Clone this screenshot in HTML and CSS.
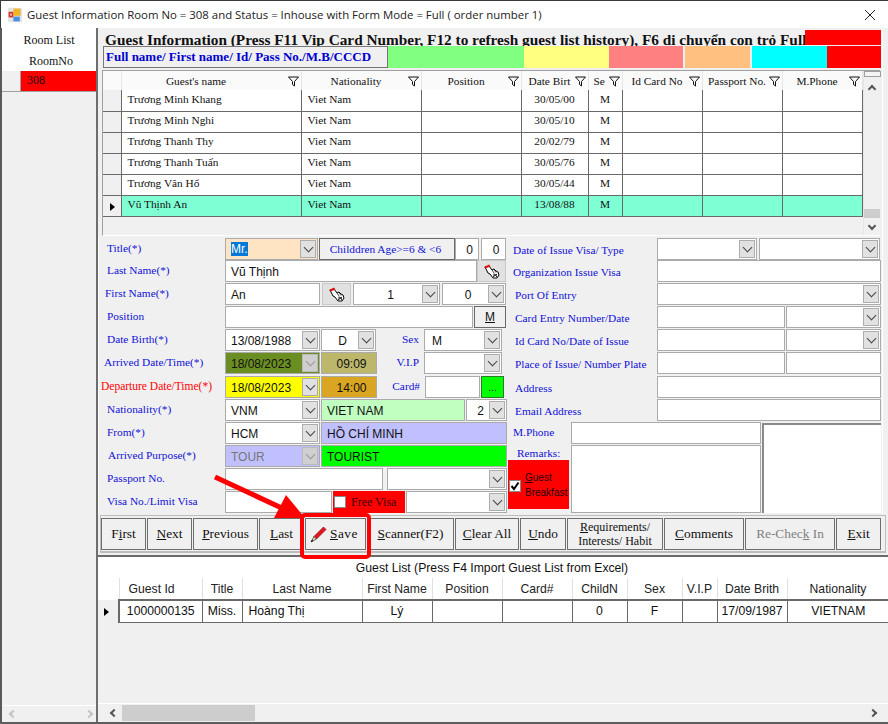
FILE: index.html
```html
<!DOCTYPE html>
<html lang="en">
<head>
  <meta charset="UTF-8">
  <title>Guest Information</title>
  <link rel="stylesheet" href="styles.css">
</head>
<body>
<div class="window">

  <div class="titlebar">
    <svg class="app-icon" viewBox="0 0 20 20">
      <rect x="1" y="1" width="18" height="18" fill="#e4e4e4"/>
      <rect x="2" y="6" width="6" height="7" fill="#d8302a"/>
      <rect x="4" y="8" width="2" height="3" fill="#f5d0c0"/>
      <rect x="8" y="2" width="9" height="9" fill="#f0b428"/>
      <rect x="8" y="12" width="8" height="6" fill="#4a8fe0"/>
    </svg>
    <span class="title-text">Guest Information Room No = 308 and Status = Inhouse with Form Mode = Full ( order number 1)</span>
    <svg class="close-x" viewBox="0 0 12 12"><path d="M1 1L11 11M11 1L1 11" stroke="#222" stroke-width="1" fill="none"/></svg>
  </div>

  <div class="main">
    <aside class="side">
      <div class="side-head">
        <div>Room List</div>
        <div class="side-col">RoomNo</div>
      </div>
      <div class="side-row"><span class="side-hdr"></span><span class="side-cell">308</span></div>
      <div class="side-fill"></div>
      <div class="side-scroll"><span class="chev chev-l faint"></span><span class="chev chev-r faint"></span></div>
    </aside>

    <div class="content">
      <div class="upper">
        <div class="heading-row">
          <div class="heading">Guest Information (Press F11 Vip Card Number, F12 to refresh guest list history), F6 di chuyển con trỏ Full</div>
          <div class="heading-flag"></div>
        </div>

        <div class="filter-row">
          <div class="filter-box">Full name/ First name/ Id/ Pass No./M.B/CCCD</div>
          <span class="swatch sw-green"></span>
          <span class="swatch sw-yellow"></span>
          <span class="swatch sw-pink"></span>
          <span class="swatch sw-orange"></span>
          <span class="swatch sw-cyan"></span>
          <span class="swatch sw-red"></span>
        </div>

        <div class="history">
          <table class="history-table">
            <colgroup>
              <col class="c18"><col class="c180"><col class="c120"><col class="c100"><col class="c67"><col class="c34"><col class="c80"><col class="c80"><col class="c80">
            </colgroup>
            <thead>
              <tr>
                <th></th>
                <th class="th-name"><span>Guest's name</span><svg class="funnel"><use href="#funnel"/></svg></th>
                <th><span>Nationality</span><svg class="funnel"><use href="#funnel"/></svg></th>
                <th><span>Position</span><svg class="funnel"><use href="#funnel"/></svg></th>
                <th class="th-tight"><span>Date Birt</span><svg class="funnel"><use href="#funnel"/></svg></th>
                <th class="th-tight th-sex"><span>Se</span><svg class="funnel"><use href="#funnel"/></svg></th>
                <th><span>Id Card No</span><svg class="funnel"><use href="#funnel"/></svg></th>
                <th><span>Passport No.</span><svg class="funnel"><use href="#funnel"/></svg></th>
                <th><span>M.Phone</span><svg class="funnel"><use href="#funnel"/></svg></th>
              </tr>
            </thead>
            <tbody>
              <tr><td class="rh"></td><td>Trương Minh Khang</td><td>Viet Nam</td><td></td><td class="mid">30/05/00</td><td class="mid">M</td><td></td><td></td><td></td></tr>
              <tr><td class="rh"></td><td>Trương Minh Nghi</td><td>Viet Nam</td><td></td><td class="mid">30/05/10</td><td class="mid">M</td><td></td><td></td><td></td></tr>
              <tr><td class="rh"></td><td>Trương Thanh Thy</td><td>Viet Nam</td><td></td><td class="mid">20/02/79</td><td class="mid">M</td><td></td><td></td><td></td></tr>
              <tr><td class="rh"></td><td>Trương Thanh Tuấn</td><td>Viet Nam</td><td></td><td class="mid">30/05/76</td><td class="mid">M</td><td></td><td></td><td></td></tr>
              <tr><td class="rh"></td><td>Trương Văn Hổ</td><td>Viet Nam</td><td></td><td class="mid">30/05/44</td><td class="mid">M</td><td></td><td></td><td></td></tr>
              <tr class="current"><td class="rh"><span class="row-mark"></span></td><td>Vũ Thịnh An</td><td>Viet Nam</td><td></td><td class="mid">13/08/88</td><td class="mid">M</td><td></td><td></td><td></td></tr>
            </tbody>
          </table>
          <div class="vscroll">
            <span class="vscroll-cap"></span>
            <span class="chev chev-u"></span>
            <span class="vscroll-thumb"></span>
            <span class="chev chev-d"></span>
          </div>
        </div>

        <div class="form">
          <div class="form-left">
            <div class="row row-short">
              <label>Title(*)</label>
              <div class="sel w93 bg-peach"><span class="picked">Mr.</span><span class="drop"></span></div>
              <button class="btn-child">Childdren Age&gt;=6 &amp; &lt;6</button>
              <div class="fld w24 mid">0</div>
              <div class="fld w25 mid gap2">0</div>
            </div>
            <div class="row">
              <label>Last Name(*)</label>
              <div class="fld w252">Vũ Thịnh</div>
              <button class="btn-hand"><svg class="hand"><use href="#hand"/></svg></button>
            </div>
            <div class="row">
              <label class="in-1">First Name(*)</label>
              <div class="fld w95">An</div>
              <button class="btn-hand gap2"><svg class="hand"><use href="#hand"/></svg></button>
              <div class="sel w87 gap2 center"><span>1</span><span class="drop"></span></div>
              <div class="sel w64 gap2 center"><span>0</span><span class="drop"></span></div>
            </div>
            <div class="row">
              <label>Position</label>
              <div class="fld w248"></div>
              <button class="btn-m"><u>M</u></button>
            </div>
            <div class="row">
              <label>Date Birth(*)</label>
              <div class="sel w95"><span>13/08/1988</span><span class="drop"></span></div>
              <div class="sel w55 gap1 center"><span>D</span><span class="drop"></span></div>
              <span class="mini-label w48">Sex</span>
              <div class="sel w78"><span class="pad-sel">M</span><span class="drop"></span></div>
            </div>
            <div class="row row-tall">
              <label class="in-2">Arrived Date/Time(*)</label>
              <div class="sel w95 bg-olive"><span>18/08/2023</span><span class="drop off"></span></div>
              <div class="fld w56 gap1 mid bg-khaki">09:09</div>
              <span class="mini-label w47">V.I.P</span>
              <div class="sel w78"><span></span><span class="drop"></span></div>
            </div>
            <div class="row">
              <label class="in-3 red-text">Departure Date/Time(*)</label>
              <div class="sel w95 bg-yellow"><span>18/08/2023</span><span class="drop"></span></div>
              <div class="fld w56 gap1 mid bg-gold">14:00</div>
              <span class="mini-label w48">Card#</span>
              <div class="fld w55"></div>
              <button class="btn-dots">...</button>
            </div>
            <div class="row">
              <label>Nationality(*)</label>
              <div class="sel w95"><span>VNM</span><span class="drop"></span></div>
              <div class="fld w144 gap1 bg-mint">VIET NAM</div>
              <div class="sel w41 gap1 center"><span>2</span><span class="drop"></span></div>
            </div>
            <div class="row">
              <label>From(*)</label>
              <div class="sel w95"><span>HCM</span><span class="drop"></span></div>
              <div class="fld w186 gap1 bg-lilac">HỒ CHÍ MINH</div>
            </div>
            <div class="row">
              <label class="in-0">Arrived Purpose(*)</label>
              <div class="sel w95 bg-lilac muted"><span>TOUR</span><span class="drop off"></span></div>
              <div class="fld w186 gap1 bg-lime">TOURIST</div>
            </div>
            <div class="row">
              <label>Passport No.</label>
              <div class="fld w158"></div>
              <div class="sel w120 gap4"><span></span><span class="drop"></span></div>
            </div>
            <div class="row">
              <label>Visa No./Limit Visa</label>
              <div class="fld w107"></div>
              <div class="free-visa"><span class="check"></span><span>Free Visa</span></div>
              <div class="sel w101 gap1"><span></span><span class="drop"></span></div>
            </div>
          </div>

          <div class="form-right">
            <div class="row row-short">
              <label class="rl rl-in">Date of Issue Visa/ Type</label>
              <div class="sel w100"><span></span><span class="drop"></span></div>
              <div class="sel w121 gap2"><span></span><span class="drop"></span></div>
            </div>
            <div class="row">
              <label class="rl rl-in">Organization Issue Visa</label>
              <div class="fld w224"></div>
            </div>
            <div class="row">
              <label class="rl">Port Of Entry</label>
              <div class="sel w224"><span></span><span class="drop"></span></div>
            </div>
            <div class="row">
              <label class="rl">Card Entry Number/Date</label>
              <div class="fld w128"></div>
              <div class="sel w95 gap1"><span></span><span class="drop"></span></div>
            </div>
            <div class="row">
              <label class="rl">Id Card No/Date of Issue</label>
              <div class="fld w128"></div>
              <div class="sel w95 gap1"><span></span><span class="drop"></span></div>
            </div>
            <div class="row row-tall">
              <label class="rl">Place of Issue/ Number Plate</label>
              <div class="fld w128"></div>
              <div class="fld w95 gap1"></div>
            </div>
            <div class="row">
              <label class="rl">Address</label>
              <div class="fld w224"></div>
            </div>
            <div class="row">
              <label class="rl">Email Address</label>
              <div class="fld w224"></div>
            </div>
            <div class="notes">
              <div class="notes-labels">
                <div class="note-label">M.Phone</div>
                <div class="note-label remarks">Remarks:</div>
                <div class="breakfast">
                  <span class="check checked"><svg viewBox="0 0 10 10"><path d="M1.5 5L4 8L8.5 1.5" stroke="#000" stroke-width="2" fill="none"/></svg></span>
                  <span class="breakfast-text"><u>G</u>uest<br>Breakfast</span>
                </div>
              </div>
              <div class="notes-fields">
                <div class="fld w190"></div>
                <div class="fld note-area"></div>
              </div>
              <div class="note-box"></div>
            </div>
          </div>
        </div>
      </div>

      <div class="actions">
        <button class="act w45"><span>F<u>i</u>rst</span></button>
        <button class="act w45"><span><u>N</u>ext</span></button>
        <button class="act w65"><span><u>P</u>revious</span></button>
        <button class="act w45"><span><u>L</u>ast</span></button>
        <button class="act act-save w61"><svg class="pencil" viewBox="0 0 17 17"><path d="M4 10.5L13.5 1L16 3.5L6.5 13Z" fill="#e8141c" stroke="#7a0c10" stroke-width=".7"/><path d="M4 10.5L6.5 13L1 16Z" fill="#f2d9b0" stroke="#222" stroke-width=".7"/><path d="M1 16L2 13.8L3.2 15Z" fill="#000"/></svg><span><u>S</u>ave</span></button>
        <button class="act w87"><span><u>S</u>canner(F2)</span></button>
        <button class="act w64"><span><u>C</u>lear All</span></button>
        <button class="act w46"><span><u>U</u>ndo</span></button>
        <button class="act w96 two-line"><span><u>R</u>equirements/<br>Interests/ Habit</span></button>
        <button class="act w80"><span><u>C</u>omments</span></button>
        <button class="act w90 disabled"><span>Re-Chec<u>k</u> In</span></button>
        <button class="act w45"><span><u>E</u>xit</span></button>
      </div>

      <div class="guests">
        <div class="guests-title">Guest List (Press F4 Import Guest List from Excel)</div>
        <table class="guests-table">
          <colgroup>
            <col class="g21"><col class="g83"><col class="g40"><col class="g120"><col class="g70"><col class="g70"><col class="g70"><col class="g55"><col class="g55"><col class="g35"><col class="g70"><col class="g102">
          </colgroup>
          <thead>
            <tr><th></th><th class="th-id">Guest Id</th><th>Title</th><th>Last Name</th><th>First Name</th><th>Position</th><th>Card#</th><th>ChildN</th><th>Sex</th><th>V.I.P</th><th>Date Brith</th><th>Nationality</th></tr>
          </thead>
          <tbody>
            <tr>
              <td class="rh"><span class="row-mark"></span></td>
              <td class="mid first-cell">1000000135</td><td class="mid">Miss.</td><td>Hoàng Thị</td><td class="mid">Lý</td><td></td><td></td><td class="mid">0</td><td class="mid">F</td><td></td><td class="mid">17/09/1987</td><td class="mid">VIETNAM</td>
            </tr>
          </tbody>
        </table>
      </div>

      <div class="hscroll">
        <span class="chev chev-l"></span>
        <span class="hscroll-thumb"></span>
        <span class="chev chev-r"></span>
      </div>
    </div>
  </div>

  <div class="desktop-strip"></div>

  <!-- red marker drawn over the screenshot -->
  <svg class="marker" viewBox="0 0 888 724">
    <path d="M215 477L286 510" stroke="#f00" stroke-width="5" fill="none"/>
    <polygon points="286,495 305,518 274,518" fill="#f00"/>
    <rect x="302" y="515" width="67" height="42" rx="3" fill="none" stroke="#f00" stroke-width="4"/>
  </svg>

  <svg class="defs">
    <symbol id="funnel" viewBox="0 0 11 11">
      <path d="M.5 1H10.5L6.5 5.5V10L4.5 8.5V5.5Z" fill="none" stroke="#111" stroke-width="1"/>
    </symbol>
    <symbol id="hand" viewBox="0 0 17 15">
      <path d="M2 3L6 2L9 6L11 5L13 7L15 8L16 11L14 14L10 14L7 10L5 9Z" fill="#fff" stroke="#000" stroke-width="1"/>
      <path d="M1 3L6 .5L7.5 2.5L2.5 4.5Z" fill="#e01010"/>
      <path d="M9 6L11 9M11 5.5L13 8.5" stroke="#000" stroke-width=".7"/>
      <path d="M10 11H14M11 9.5L14 13M10 13L14 10" stroke="#222" stroke-width="1"/>
    </symbol>
  </svg>
</div>
</body>
</html>
```

FILE: styles.css
```css
* {
  box-sizing: border-box;
}

html, body {
  margin: 0;
  padding: 0;
  height: 100%;
  overflow: hidden;
}

body {
  font-family: "Liberation Serif", serif;
  font-size: 11.33px;
  color: #111;
  background-color: #f0f0f0;
}

button {
  font-family: "Liberation Serif", serif;
  padding: 0;
  margin: 0;
  color: #111;
}

.window {
  position: relative;
  width: 888px;
  height: 724px;
  display: flex;
  flex-direction: column;
  border-top: 1px solid #3a3a3a;
  overflow: hidden;
}

/* title bar */
.titlebar {
  height: 27px;
  flex: none;
  display: flex;
  align-items: center;
  background-color: #fff;
  border-left: 1px solid #3a3a3a;
  padding-left: 6px;
}

.app-icon {
  width: 16px;
  height: 16px;
  margin-right: 4px;
}

.title-text {
  font-family: "Open Sans", sans-serif;
  font-size: 11.4px;
  flex: 1;
  white-space: nowrap;
  color: #222;
}

.close-x {
  width: 12px;
  height: 12px;
  margin-right: 12px;
}

/* room list */
.main {
  flex: 1;
  display: flex;
  min-height: 0;
}

.side {
  width: 98px;
  flex: none;
  display: flex;
  flex-direction: column;
  border-left: 2px solid #5a5a5a;
  border-right: 2px solid #6e6e6e;
}

.side-head {
  height: 43px;
  background-color: #fff;
  text-align: center;
  padding-top: 2px;
  line-height: 21px;
  font-size: 12px;
}

.side-col {
  padding-left: 4px;
}

.side-row {
  height: 21px;
  display: flex;
  border-bottom: 1px solid #a0a0a0;
}

.side-hdr {
  width: 19px;
  border-right: 1px solid #a0a0a0;
}

.side-cell {
  flex: 1;
  background-color: #f00;
  padding-left: 6px;
  line-height: 18px;
  font-size: 12px;
}

.side-fill {
  flex: 1;
}

.side-scroll {
  height: 16px;
  margin-bottom: 1px;
  border-top: 1px solid #fff;
  display: flex;
  align-items: center;
  justify-content: space-between;
  padding: 0 4px 0 8px;
}

.content {
  flex: 1;
  min-width: 0;
  display: flex;
  flex-direction: column;
}

.upper {
  width: 785px;
  border-right: 1px solid #fff;
  padding-top: 2px;
}

/* heading and colour legend */
.heading-row {
  display: flex;
  height: 16px;
  padding-left: 7px;
  padding-right: 1px;
}

.heading {
  flex: 1;
  min-width: 0;
  font-size: 15.3px;
  font-weight: bold;
  line-height: 20px;
  white-space: nowrap;
  overflow: hidden;
}

.heading-flag {
  width: 76px;
  height: 15px;
  background-color: #f00;
}

.filter-row {
  display: flex;
  height: 22px;
  margin-left: 5px;
  margin-right: 1px;
}

.filter-box {
  width: 285px;
  border: 1px solid #777;
  font-size: 13px;
  font-weight: bold;
  color: #0000d0;
  line-height: 20px;
  padding-left: 2px;
  white-space: nowrap;
  overflow: hidden;
}

.swatch {
  display: block;
}

.sw-green { width: 137px; background-color: #80ff80; }
.sw-yellow { width: 85px; background-color: #ffff80; }
.sw-pink { width: 74px; background-color: #ff8080; margin-right: 2px; }
.sw-orange { width: 65px; background-color: #ffc080; margin-right: 2px; }
.sw-cyan { width: 75px; background-color: #0ff; }
.sw-red { width: 54px; background-color: #f00; }

/* history grid */
.history {
  display: flex;
  height: 166px;
  margin: 2px 2px 0 4px;
  border-top: 1px solid #a0a0a0;
  border-left: 1px solid #a0a0a0;
  border-bottom: 1px solid #fff;
}

.history-table {
  width: 759px;
  table-layout: fixed;
  border-collapse: collapse;
  align-self: flex-start;
}

.c18 { width: 18px; }
.c180 { width: 180px; }
.c120 { width: 120px; }
.c100 { width: 100px; }
.c67 { width: 67px; }
.c34 { width: 34px; }
.c80 { width: 80px; }

.history-table th {
  height: 19px;
  position: relative;
  background-color: #fafafa;
  border-right: 1px solid #e6e6e6;
  font-weight: normal;
  font-size: 11.33px;
  text-align: center;
  padding: 0 10px 0 0;
  white-space: nowrap;
  overflow: hidden;
}

.history-table .th-name {
  padding-right: 30px;
}

.history-table .th-tight {
  text-align: left;
  padding-left: 7px;
}

.history-table .th-sex {
  padding-left: 5px;
}

.funnel {
  position: absolute;
  right: 2px;
  top: 5px;
  width: 11px;
  height: 11px;
}

.history-table td {
  height: 21px;
  padding: 0 0 3px 6px;
  background-color: #fff;
  border-right: 1px solid #696969;
  border-bottom: 1px solid #696969;
  white-space: nowrap;
  overflow: hidden;
}

.history-table td.mid {
  padding-left: 0;
}

.history-table .rh {
  background-color: #f0f0f0;
  padding: 0;
}

.history-table .current td {
  background-color: #7fffd4;
}

.history-table .current .rh {
  background-color: #f0f0f0;
  text-align: center;
  padding-left: 2px;
}

.mid {
  text-align: center;
}

.row-mark {
  display: inline-block;
  width: 0;
  height: 0;
  border-left: 5px solid #000;
  border-top: 4.5px solid transparent;
  border-bottom: 4.5px solid transparent;
  vertical-align: middle;
}

.vscroll {
  width: 18px;
  display: flex;
  flex-direction: column;
  align-items: center;
  border-left: 1px solid #e6e6e6;
}

.vscroll-cap {
  width: 17px;
  height: 6px;
  border: 1px solid #a0a0a0;
  background-color: #f4f4f4;
  margin-bottom: 9px;
}

.vscroll-thumb {
  width: 16px;
  height: 9px;
  background-color: #cdcdcd;
  margin-top: 117px;
  margin-bottom: 5px;
}

/* chevrons, shared by scrollbars */
.chev {
  display: block;
  width: 6px;
  height: 6px;
  border-top: 2px solid #555;
  border-left: 2px solid #555;
}

.chev-u { transform: rotate(45deg); }
.chev-d { transform: rotate(225deg); }
.chev-l { transform: rotate(-45deg); }
.chev-r { transform: rotate(135deg); }

.chev.faint {
  border-color: #c4c4c4;
}

/* form */
.form {
  display: flex;
  margin-top: 2px;
}

.form-left {
  width: 409px;
  flex: none;
  border-left: 1px solid #fff;
}

.form-right {
  flex: 1;
}

.row {
  display: flex;
  height: 23px;
  align-items: flex-start;
}

.row-short {
  height: 22px;
}

.row-tall {
  height: 24px;
}

.row label {
  width: 126px;
  flex: none;
  color: #1010d8;
  line-height: 21px;
  padding-left: 8px;
  white-space: nowrap;
}

.row .in-0 { padding-left: 9px; }
.row .in-1 { padding-left: 6px; }
.row .in-2 { padding-left: 5px; }
.row .in-3 { padding-left: 2px; font-size: 11.5px; }
.row .red-text { color: #f00; }

.row .rl {
  width: 150px;
  padding-left: 8px;
  padding-top: 2px;
}

.row .rl-in {
  padding-left: 6px;
}

.fld, .sel {
  height: 22px;
  flex: none;
  background-color: #fff;
  border: 1px solid #ababab;
  font-family: "Liberation Sans", sans-serif;
  font-size: 12px;
  line-height: 22px;
  padding-left: 5px;
  white-space: nowrap;
  overflow: hidden;
}

.sel {
  display: flex;
  justify-content: space-between;
  padding-right: 1px;
}

.sel.center > span:first-child {
  flex: 1;
  text-align: center;
}

.pad-sel {
  padding-left: 2px;
}

.drop {
  position: relative;
  display: block;
  width: 16px;
  height: 18px;
  margin-top: 1px;
  flex: none;
  background-color: #e1e1e1;
  border: 1px solid #adadad;
}

.drop::before {
  content: "";
  position: absolute;
  left: 4px;
  top: 3px;
  width: 6px;
  height: 6px;
  border-right: 1px solid #444;
  border-bottom: 1px solid #444;
  transform: rotate(45deg);
}

.drop.off {
  background-color: #cfcfcf;
  border-color: #bbb;
}

.drop.off::before {
  border-color: #999;
}

.picked {
  background-color: #0078d7;
  color: #fff;
  line-height: 14px;
  height: 14px;
  margin-top: 3px;
}

.bg-peach { background-color: #ffe4c4; }
.bg-olive { background-color: #6b8e23; }
.bg-khaki { background-color: #bdb76b; }
.bg-yellow { background-color: #ff0; }
.bg-gold { background-color: #daa520; }
.bg-mint { background-color: #c0ffc0; }
.bg-lilac { background-color: #c0c0ff; }
.bg-lime { background-color: #0f0; }
.muted { color: #777; }

.btn-child {
  width: 136px;
  height: 22px;
  margin-left: 1px;
  padding-right: 3px;
  background-color: #f0f0f0;
  border: 1px solid #696969;
  color: #1010d8;
  font-size: 11.33px;
}

.btn-hand {
  width: 29px;
  height: 22px;
  flex: none;
  background-color: #e1e1e1;
  border: 1px solid #c8c8c8;
}

.hand {
  display: block;
  width: 17px;
  height: 15px;
  margin: 1px auto 0;
}

.btn-m {
  width: 32px;
  height: 22px;
  margin-left: 1px;
  background-color: #f0f0f0;
  border: 1px solid #696969;
  font-family: "Liberation Sans", sans-serif;
  font-size: 12px;
}

.btn-dots {
  width: 23px;
  height: 22px;
  margin-left: 1px;
  background-color: #0f0;
  border: 1px solid #2a7a2a;
  font-family: "Liberation Sans", sans-serif;
  font-size: 10px;
}

.mini-label {
  flex: none;
  color: #1010d8;
  line-height: 21px;
  text-align: right;
  padding-right: 5px;
}

.gap1 { margin-left: 1px; }
.gap2 { margin-left: 2px; }
.gap4 { margin-left: 4px; }

.w24 { width: 24px; }
.w25 { width: 25px; }
.w41 { width: 41px; }
.w45 { width: 45px; }
.w46 { width: 46px; }
.w47 { width: 47px; }
.w48 { width: 48px; }
.w55 { width: 55px; }
.w56 { width: 56px; }
.w61 { width: 61px; }
.w64 { width: 64px; }
.w65 { width: 65px; }
.w78 { width: 78px; }
.w80 { width: 80px; }
.w87 { width: 87px; }
.w90 { width: 90px; }
.w93 { width: 93px; }
.w95 { width: 95px; }
.w96 { width: 96px; }
.w100 { width: 100px; }
.w101 { width: 101px; }
.w107 { width: 107px; }
.w120 { width: 120px; }
.w121 { width: 121px; }
.w128 { width: 128px; }
.w144 { width: 144px; }
.w158 { width: 158px; }
.w186 { width: 186px; }
.w190 { width: 190px; }
.w224 { width: 224px; }
.w248 { width: 248px; }
.w252 { width: 252px; }

.free-visa {
  width: 72px;
  height: 22px;
  margin-left: 1px;
  flex: none;
  display: flex;
  align-items: center;
  gap: 5px;
  padding-left: 1px;
  background-color: #f00;
  color: #3a0000;
  font-size: 12px;
  white-space: nowrap;
}

.check {
  display: block;
  width: 12px;
  height: 12px;
  flex: none;
  background-color: #fff;
  border: 1px solid #888;
}

.check svg {
  display: block;
  width: 10px;
  height: 10px;
}

/* remarks block */
.notes {
  display: flex;
  height: 92px;
}

.notes-labels {
  width: 64px;
  flex: none;
  position: relative;
}

.note-label {
  color: #1010d8;
  line-height: 21px;
  padding-left: 6px;
}

.note-label.remarks {
  padding-left: 10px;
}

.breakfast {
  width: 61px;
  height: 49px;
  margin-left: 1px;
  margin-top: -4px;
  display: flex;
  align-items: center;
  background-color: #f00;
  overflow: hidden;
}

.breakfast .check {
  margin-left: 1px;
  margin-top: 2px;
}

.breakfast-text {
  font-family: "Liberation Sans", sans-serif;
  font-size: 10px;
  line-height: 15px;
  margin-left: 4px;
  white-space: nowrap;
  color: #200;
}

.notes-fields {
  width: 191px;
  flex: none;
}

.note-area {
  width: 190px;
  height: 68px;
  margin-top: 1px;
}

.note-box {
  width: 119px;
  height: 90px;
  margin-top: 1px;
  background-color: #fff;
  border-top: 2px solid #8a8a8a;
  border-left: 2px solid #8a8a8a;
}

/* action buttons */
.actions {
  display: flex;
  gap: 1px;
  width: 786px;
  height: 38px;
  margin: 1px 0 0 2px;
  padding: 2px 0 0 0;
  border: 1px solid #bdbdbd;
  border-bottom-width: 2px;
}

.act {
  flex: none;
  height: 32px;
  display: flex;
  align-items: center;
  justify-content: center;
  gap: 5px;
  background-color: #f0f0f0;
  border: 1px solid #6e6e6e;
  font-size: 13.33px;
  white-space: nowrap;
}

.act.two-line {
  font-size: 12px;
  line-height: 14px;
}

.act.disabled {
  color: #808080;
}

.act.act-save {
  justify-content: flex-start;
  padding-left: 4px;
  gap: 3px;
  letter-spacing: 0.5px;
}

.pencil {
  width: 17px;
  height: 17px;
}

/* guest list */
.guests {
  flex: 1;
  min-height: 0;
  border-top: 2px solid #6a6a6a;
  margin-top: 2px;
  font-family: "Liberation Sans", sans-serif;
  font-size: 12.2px;
}

.guests-title {
  height: 21px;
  background-color: #fff;
  text-align: center;
  line-height: 22px;
  padding-right: 2px;
}

.guests-table {
  width: 790px;
  table-layout: fixed;
  border-collapse: collapse;
}

.g21 { width: 21px; }
.g83 { width: 83px; }
.g40 { width: 40px; }
.g120 { width: 120px; }
.g70 { width: 70px; }
.g55 { width: 55px; }
.g35 { width: 35px; }
.g102 { width: 102px; }

.guests-table th {
  height: 22px;
  background-color: #fff;
  border-right: 1px solid #e0e0e0;
  border-bottom: 2px solid #696969;
  font-weight: normal;
  color: #222;
  white-space: nowrap;
}

.guests-table th:first-child {
  border-bottom: none;
}

.guests-table .th-id {
  text-align: left;
  padding-left: 9px;
}

.guests-table td {
  height: 22px;
  padding: 0 0 1px 6px;
  background-color: #fff;
  border-right: 1px solid #696969;
  border-bottom: 1px solid #696969;
  white-space: nowrap;
}

.guests-table td.mid {
  padding-left: 0;
}

.guests-table td:last-child {
  border-right: none;
}

.guests-table .rh {
  background-color: #f0f0f0;
  padding: 0 0 0 6px;
  border-bottom: none;
  border-right: 2px solid #696969;
}

.guests-table .first-cell {
  padding-left: 8px;
}

.hscroll {
  height: 18px;
  flex: none;
  display: flex;
  align-items: center;
  border-top: 1px solid #fff;
  margin-bottom: 1px;
  padding-left: 13px;
}

.hscroll .chev-l {
  margin-right: 5px;
}

.hscroll-thumb {
  width: 133px;
  height: 16px;
  background-color: #cdcdcd;
}

.hscroll .chev-r {
  margin-left: auto;
  margin-right: 12px;
}

.desktop-strip {
  height: 2px;
  flex: none;
  background-color: #5e5e5e;
}

.marker {
  position: absolute;
  left: 0;
  top: -1px;
  width: 888px;
  height: 724px;
  pointer-events: none;
}

.defs {
  position: absolute;
  width: 0;
  height: 0;
}
```
